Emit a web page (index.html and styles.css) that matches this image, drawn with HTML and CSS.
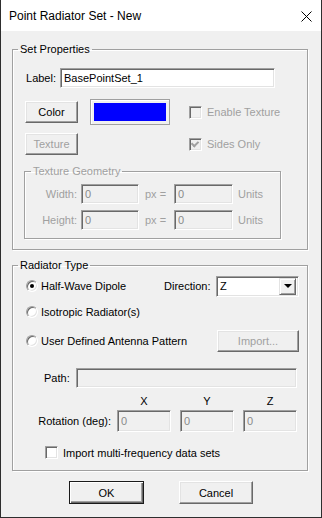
FILE: index.html
```html
<!DOCTYPE html>
<html lang="en">
<head>
    <meta charset="UTF-8">
    <title>Point Radiator Set - New</title>
    <link rel="stylesheet" href="styles.css">
</head>
<body>

<div class="window">
    <div class="titlebar">
        <span class="title">Point Radiator Set - New</span>
        <svg class="close" width="11" height="11" viewBox="0 0 11 11">
            <path d="M0.5 0.5 L10.5 10.5 M10.5 0.5 L0.5 10.5" stroke="#000" stroke-width="1" fill="none"/>
        </svg>
    </div>

    <div class="client">
        <fieldset class="group set-props">
            <legend>Set Properties</legend>
            <div class="label-row">
                <span class="lbl">Label:</span>
                <input class="edit label-edit" type="text" value="BasePointSet_1">
            </div>

            <div class="props-grid">
                <button class="btn">Color</button>
                <div class="swatch"><div class="swatch-fill"></div></div>
                <div class="check disabled"><span class="box"></span>Enable Texture</div>

                <button class="btn" disabled>Texture</button>
                <div></div>
                <div class="check disabled"><span class="box checked"></span>Sides Only</div>
            </div>

            <fieldset class="group geom disabled">
                <legend>Texture Geometry</legend>
                <div class="geom-row">
                    <span class="geom-lbl">Width:</span>
                    <input class="edit geom-a" type="text" value="0" disabled>
                    <span class="geom-eq">px =</span>
                    <input class="edit geom-b" type="text" value="0" disabled>
                    <span class="geom-unit">Units</span>
                </div>
                <div class="geom-row">
                    <span class="geom-lbl">Height:</span>
                    <input class="edit geom-a" type="text" value="0" disabled>
                    <span class="geom-eq">px =</span>
                    <input class="edit geom-b" type="text" value="0" disabled>
                    <span class="geom-unit">Units</span>
                </div>
            </fieldset>
        </fieldset>

        <fieldset class="group radiator">
            <legend>Radiator Type</legend>
            <div class="row-dipole">
                <div class="radio-opt opt-dipole"><span class="radio on"></span>Half-Wave Dipole</div>
                <span class="dir-lbl">Direction:</span>
                <div class="combo">
                    <span class="combo-text">Z</span>
                    <span class="combo-btn"><span class="arrow"></span></span>
                </div>
            </div>
            <div class="row-iso">
                <div class="radio-opt"><span class="radio"></span>Isotropic Radiator(s)</div>
            </div>
            <div class="row-user">
                <div class="radio-opt opt-user"><span class="radio"></span>User Defined Antenna Pattern</div>
                <button class="btn import-btn" disabled>Import...</button>
            </div>
            <div class="row-path">
                <span class="path-lbl">Path:</span>
                <input class="edit path-edit" type="text" value="" disabled>
            </div>
            <div class="row-axes">
                <span>X</span><span>Y</span><span>Z</span>
            </div>
            <div class="row-rot">
                <span class="rot-lbl">Rotation (deg):</span>
                <input class="edit rot-edit" type="text" value="0" disabled>
                <input class="edit rot-edit" type="text" value="0" disabled>
                <input class="edit rot-edit" type="text" value="0" disabled>
            </div>
            <div class="row-multi">
                <div class="check"><span class="box white"></span>Import multi-frequency data sets</div>
            </div>
        </fieldset>

        <div class="actions">
            <button class="btn default ok-btn">OK</button>
            <button class="btn cancel-btn">Cancel</button>
        </div>
    </div>
</div>

</body>
</html>
```

FILE: styles.css
```css
html, body { margin: 0; padding: 0; }
body { font-family: "Liberation Sans", Arial, sans-serif; font-size: 11px; color: #000; background: #f0f0f0; }

.window { width: 322px; height: 518px; box-sizing: border-box; border: 1px solid #2e2e2e; border-top: none; background: #f0f0f0; }

.titlebar { height: 31px; background: #fff; display: flex; align-items: center; justify-content: space-between; padding: 0 9px 0 8px; }
.title { font-size: 12px; line-height: 14px; margin-top: 1px; }
.close { display: block; margin-top: 1px; }

.client { padding: 11px 0 0 11px; }

/* group boxes */
.group { margin: 0; padding: 0; border: 1px solid #a0a0a0; box-shadow: 1px 1px 0 #fff, inset 1px 1px 0 #fff; min-width: 0; box-sizing: border-box; }
.group legend { padding: 0 2px; margin-left: 5px; line-height: 14px; }
.set-props { width: 296px; padding-bottom: 10px; }
.radiator { width: 296px; margin-top: 8px; padding-bottom: 11px; }

/* edit fields */
.edit { box-sizing: border-box; height: 20px; margin: 0; padding: 0 3px; font: inherit; color: #000; background: #fff;
    border: 1px solid; border-color: #a0a0a0 #fff #fff #a0a0a0; box-shadow: inset 1px 1px 0 #696969, inset -1px -1px 0 #e3e3e3; outline: none; }
.edit:disabled { background: #f0f0f0; color: #8a8a8a; }

/* push buttons */
.btn { box-sizing: border-box; margin: 0; padding: 0; font: inherit; color: #000; background: #f0f0f0; height: 22px;
    border: 1px solid; border-color: #fff #696969 #696969 #fff; box-shadow: inset -1px -1px 0 #a0a0a0, inset 1px 1px 0 #e3e3e3; }
.btn:disabled { color: #a0a0a0; }
.btn.default { border: 1px solid #1a1a1a; box-shadow: inset 1px 1px 0 #fff, inset -1px -1px 0 #696969, inset -2px -2px 0 #a0a0a0; }

/* check boxes and radios */
.check { display: flex; align-items: center; white-space: nowrap; }
.check.disabled { color: #a0a0a0; }
.box { width: 13px; height: 13px; box-sizing: border-box; margin-right: 5px; position: relative;
    border: 1px solid; border-color: #a0a0a0 #fff #fff #a0a0a0; box-shadow: inset 1px 1px 0 #696969, inset -1px -1px 0 #e3e3e3; background: #f0f0f0; }
.box.white { background: #fff; }
.box.checked::after { content: ""; position: absolute; left: 2px; top: 2px; width: 5px; height: 3px;
    border-left: 2px solid #a0a0a0; border-bottom: 2px solid #a0a0a0; transform: translate(0, 0) rotate(-45deg); transform-origin: 3px 3px; }

.radio-opt { display: flex; align-items: center; white-space: nowrap; }
.radio { width: 12px; height: 12px; box-sizing: border-box; border-radius: 50%; margin-right: 3px; position: relative; background: #fff;
    border: 1px solid; border-color: #a0a0a0 #fff #fff #a0a0a0; box-shadow: inset 1px 1px 0 #696969, inset -1px -1px 0 #e3e3e3; }
.radio.on::after { content: ""; position: absolute; left: 3px; top: 3px; width: 4px; height: 4px; border-radius: 50%; background: #000; }

/* set properties */
.label-row { display: flex; align-items: center; margin-top: 12px; }
.lbl { width: 43px; text-align: right; margin-right: 4px; }
.label-edit { width: 215px; }

.props-grid { display: grid; grid-template-columns: 53px 80px 1fr; grid-template-rows: 26px 22px; column-gap: 12px; row-gap: 8px;
    align-items: center; margin-top: 11px; padding-left: 12px; }
.props-grid .btn { width: 53px; }
.props-grid .check { margin-left: 7px; }
.swatch { height: 26px; box-sizing: border-box; padding: 3px; border: 1px solid #a0a0a0; box-shadow: inset 1px 1px 0 #fff; }
.swatch-fill { height: 100%; background: #0000ff; }

.geom { width: 257px; margin: 9px 0 0 11px; padding-bottom: 8px; border-color: #a0a0a0; }
.geom legend { color: #a0a0a0; margin-left: 6px; }
.geom-row { display: flex; align-items: center; margin-top: 6px; color: #a0a0a0; }
.geom-lbl { width: 52px; text-align: right; margin-right: 4px; }
.geom-a { width: 58px; }
.geom-eq { width: 29px; margin-left: 6px; }
.geom-b { width: 59px; }
.geom-unit { margin-left: 5px; }

/* radiator type */
.row-dipole { display: flex; align-items: center; height: 22px; margin-top: 3px; padding-left: 13px; }
.opt-dipole { width: 138px; }
.dir-lbl { width: 52px; }
.combo { box-sizing: border-box; width: 83px; height: 21px; display: flex; align-items: center; justify-content: space-between; background: #fff;
    border: 1px solid; border-color: #a0a0a0 #fff #fff #a0a0a0; box-shadow: inset 1px 1px 0 #696969, inset -1px -1px 0 #e3e3e3; padding: 2px 2px 2px 3px; }
.combo-btn { width: 17px; height: 17px; box-sizing: border-box; display: flex; align-items: center; justify-content: center; background: #f0f0f0;
    border: 1px solid; border-color: #e3e3e3 #696969 #696969 #e3e3e3; box-shadow: inset 1px 1px 0 #fff, inset -1px -1px 0 #a0a0a0; }
.arrow { width: 0; height: 0; border-left: 4px solid transparent; border-right: 4px solid transparent; border-top: 4px solid #000; }

.row-iso { display: flex; align-items: center; height: 16px; margin-top: 7px; padding-left: 13px; }
.row-user { display: flex; align-items: center; height: 22px; margin-top: 10px; padding-left: 13px; }
.opt-user { width: 191px; }
.import-btn { width: 82px; }

.row-path { display: flex; align-items: center; margin-top: 16px; padding-left: 31px; }
.path-lbl { width: 32px; }
.path-edit { width: 221px; }

.row-axes { display: grid; grid-template-columns: repeat(3, 54px); column-gap: 9px; height: 14px; line-height: 14px; margin-top: 6px; padding-left: 104px; text-align: center; }

.row-rot { display: flex; align-items: center; gap: 9px; margin-top: 2px; }
.rot-lbl { width: 98px; text-align: right; margin-right: -3px; }
.rot-edit { width: 54px; height: 22px; }

.row-multi { margin-top: 14px; padding-left: 32px; }

.actions { display: flex; justify-content: center; gap: 35px; margin-top: 10px; padding-right: 11px; }
.ok-btn { width: 75px; height: 23px; }
.cancel-btn { width: 74px; height: 23px; }
```
